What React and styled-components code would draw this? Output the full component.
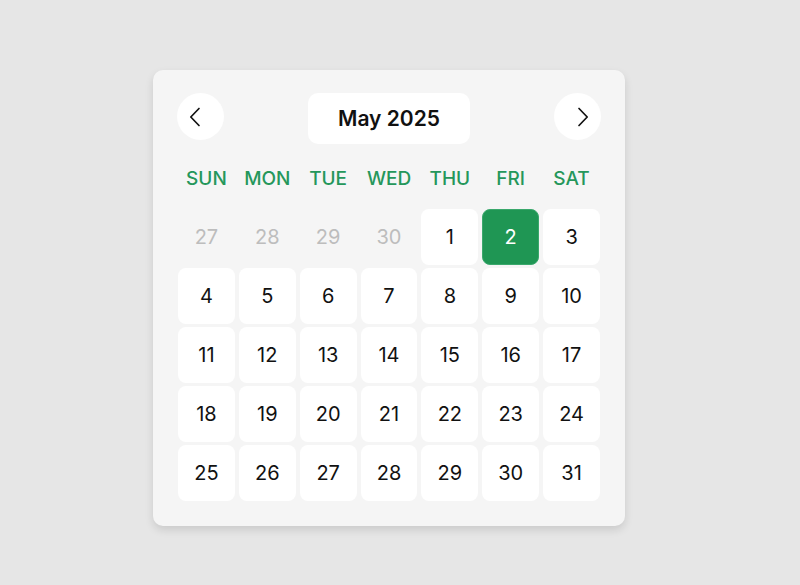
import React from "react";
import styled, { createGlobalStyle } from "styled-components";

const Global = createGlobalStyle`
  html, body { margin: 0; padding: 0; background: #e6e6e6; }
  body { font-family: "Inter", "Open Sans", sans-serif; }
`;

const Page = styled.div`
  width: 800px;
  height: 585px;
  display: flex;
  justify-content: flex-start;
  align-items: flex-start;
  padding: 70px 0 0 153px;
  box-sizing: border-box;
`;

const Card = styled.div`
  width: 472px;
  box-sizing: border-box;
  background: #f5f5f5;
  border-radius: 10px;
  padding: 23px 25px 25px 25px;
  box-shadow: 0 4px 8px rgba(0, 0, 0, 0.12);
`;

const Header = styled.div`
  display: flex;
  align-items: flex-start;
  justify-content: space-between;
`;

const NavButton = styled.button`
  width: 47px;
  height: 47px;
  border-radius: 50%;
  border: none;
  background: #ffffff;
  display: flex;
  align-items: center;
  justify-content: center;
  box-sizing: border-box;
  padding: ${(p) => (p.$dir === "left" ? "0 11px 0 0" : "0 0 0 11px")};
  margin: 0 -1px;
  cursor: pointer;
`;

const Title = styled.div`
  width: 162px;
  height: 51px;
  background: #ffffff;
  border-radius: 10px;
  display: flex;
  align-items: center;
  justify-content: center;
  font-size: 21px;
  font-weight: 600;
  color: #111;
`;

const WeekRow = styled.div`
  display: grid;
  grid-template-columns: repeat(7, 1fr);
  column-gap: 4px;
  margin-top: 21px;
  margin-bottom: 16px;
`;

const WeekDay = styled.div`
  text-align: center;
  font-size: 19px;
  font-weight: 500;
  color: #25975b;
  line-height: 28px;
`;

const Grid = styled.div`
  display: grid;
  grid-template-columns: repeat(7, 1fr);
  grid-auto-rows: 56px;
  column-gap: 4px;
  row-gap: 3px;
`;

const Day = styled.div`
  display: flex;
  align-items: center;
  justify-content: center;
  border-radius: 8px;
  font-size: 20px;
  font-weight: 400;
  box-sizing: border-box;
  background: ${(p) => (p.$muted ? "transparent" : p.$selected ? "#1f9654" : "#ffffff")};
  color: ${(p) => (p.$muted ? "#bdbdbd" : p.$selected ? "#ffffff" : "#111111")};
  border: ${(p) => (p.$selected ? "1px solid #3aa86c" : "none")};
`;

const Chevron = ({ dir }) => (
  <svg width="12" height="20" viewBox="0 0 12 20" fill="none">
    <polyline
      points={dir === "left" ? "10,1.5 1.8,10 10,18.5" : "2,1.5 10.2,10 2,18.5"}
      stroke="#111"
      strokeWidth="1.7"
      strokeLinecap="round"
      strokeLinejoin="round"
    />
  </svg>
);

const weekdays = ["SUN", "MON", "TUE", "WED", "THU", "FRI", "SAT"];

export default function App() {
  const days = [
    ...[27, 28, 29, 30].map((d) => ({ d, muted: true })),
    ...Array.from({ length: 31 }, (_, i) => ({ d: i + 1, selected: i + 1 === 2 })),
  ];
  return (
    <>
      <Global />
      <Page>
        <Card>
          <Header>
            <NavButton $dir="left" aria-label="Previous month">
              <Chevron dir="left" />
            </NavButton>
            <Title>May 2025</Title>
            <NavButton $dir="right" aria-label="Next month">
              <Chevron dir="right" />
            </NavButton>
          </Header>
          <WeekRow>
            {weekdays.map((w) => (
              <WeekDay key={w}>{w}</WeekDay>
            ))}
          </WeekRow>
          <Grid>
            {days.map((x, i) => (
              <Day key={i} $muted={x.muted} $selected={x.selected}>
                {x.d}
              </Day>
            ))}
          </Grid>
        </Card>
      </Page>
    </>
  );
}
